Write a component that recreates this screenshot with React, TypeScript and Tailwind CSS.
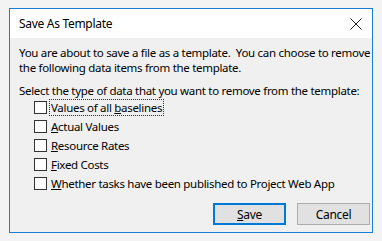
import React from "react";

const font = { fontFamily: '"Noto Sans", "Open Sans", sans-serif' };

function Check({ children }: { children: React.ReactNode }) {
  return (
    <div className="flex h-[19px] items-center pl-[15px]">
      <div className="h-[13px] w-[13px] shrink-0 border border-[#333333] bg-white" />
      <div className="ml-[2px] leading-[15px]">{children}</div>
    </div>
  );
}

export default function App() {
  return (
    <div
      className="h-[241px] w-[382px] overflow-hidden bg-[#f3f3f3] pl-[9px] pt-[8px] text-[11.5px] tracking-[-0.3px] text-black"
      style={font}
    >
      <div className="flex h-[225px] w-[364px] flex-col border border-[#1a7fd4] bg-[#f0f0f0]">
        <div className="flex h-[29px] shrink-0 items-center justify-between bg-white pl-[9px] pr-[8px]">
          <span className="text-[12px] leading-[15px]">Save As Template</span>
          <svg width="12" height="12" viewBox="0 0 12 12" className="mr-[2px]">
            <path d="M0.5 0.5 L11.5 11.5 M11.5 0.5 L0.5 11.5" stroke="#222" strokeWidth="1" fill="none" />
          </svg>
        </div>
        <div className="flex flex-col pl-[9px] pt-[7px]">
          <div className="whitespace-pre leading-[15px]">
            {"You are about to save a file as a template.  You can choose to remove"}
          </div>
          <div className="leading-[15px]">the following data items from the template.</div>
          <div className="mt-[8px] whitespace-nowrap leading-[15px]">
            Select the type of data that you want to remove from the template:
          </div>
          <div className="flex flex-col">
            <Check>
              <span className="border border-dotted border-[#333] px-[1px]">
                Values of all <span className="underline">b</span>aselines
              </span>
            </Check>
            <Check>
              <span className="pl-[2px]">
                <span className="underline">A</span>ctual Values
              </span>
            </Check>
            <Check>
              <span className="pl-[2px]">
                <span className="underline">R</span>esource Rates
              </span>
            </Check>
            <Check>
              <span className="pl-[2px]">
                <span className="underline">F</span>ixed Costs
              </span>
            </Check>
            <Check>
              <span className="pl-[2px]">
                <span className="underline">W</span>hether tasks have been published to Project Web App
              </span>
            </Check>
          </div>
          <div className="mt-[10px] flex justify-end gap-[11px] pr-[2px]">
            <button className="flex h-[22px] w-[73px] items-center justify-center border-2 border-[#0078d7] bg-[#e1e1e1] text-[12px] leading-[15px]">
              <span>
                <span className="underline">S</span>ave
              </span>
            </button>
            <button className="flex h-[22px] w-[73px] items-center justify-center border border-[#adadad] bg-[#e1e1e1] text-[12px] leading-[15px]">
              Cancel
            </button>
          </div>
        </div>
      </div>
    </div>
  );
}
